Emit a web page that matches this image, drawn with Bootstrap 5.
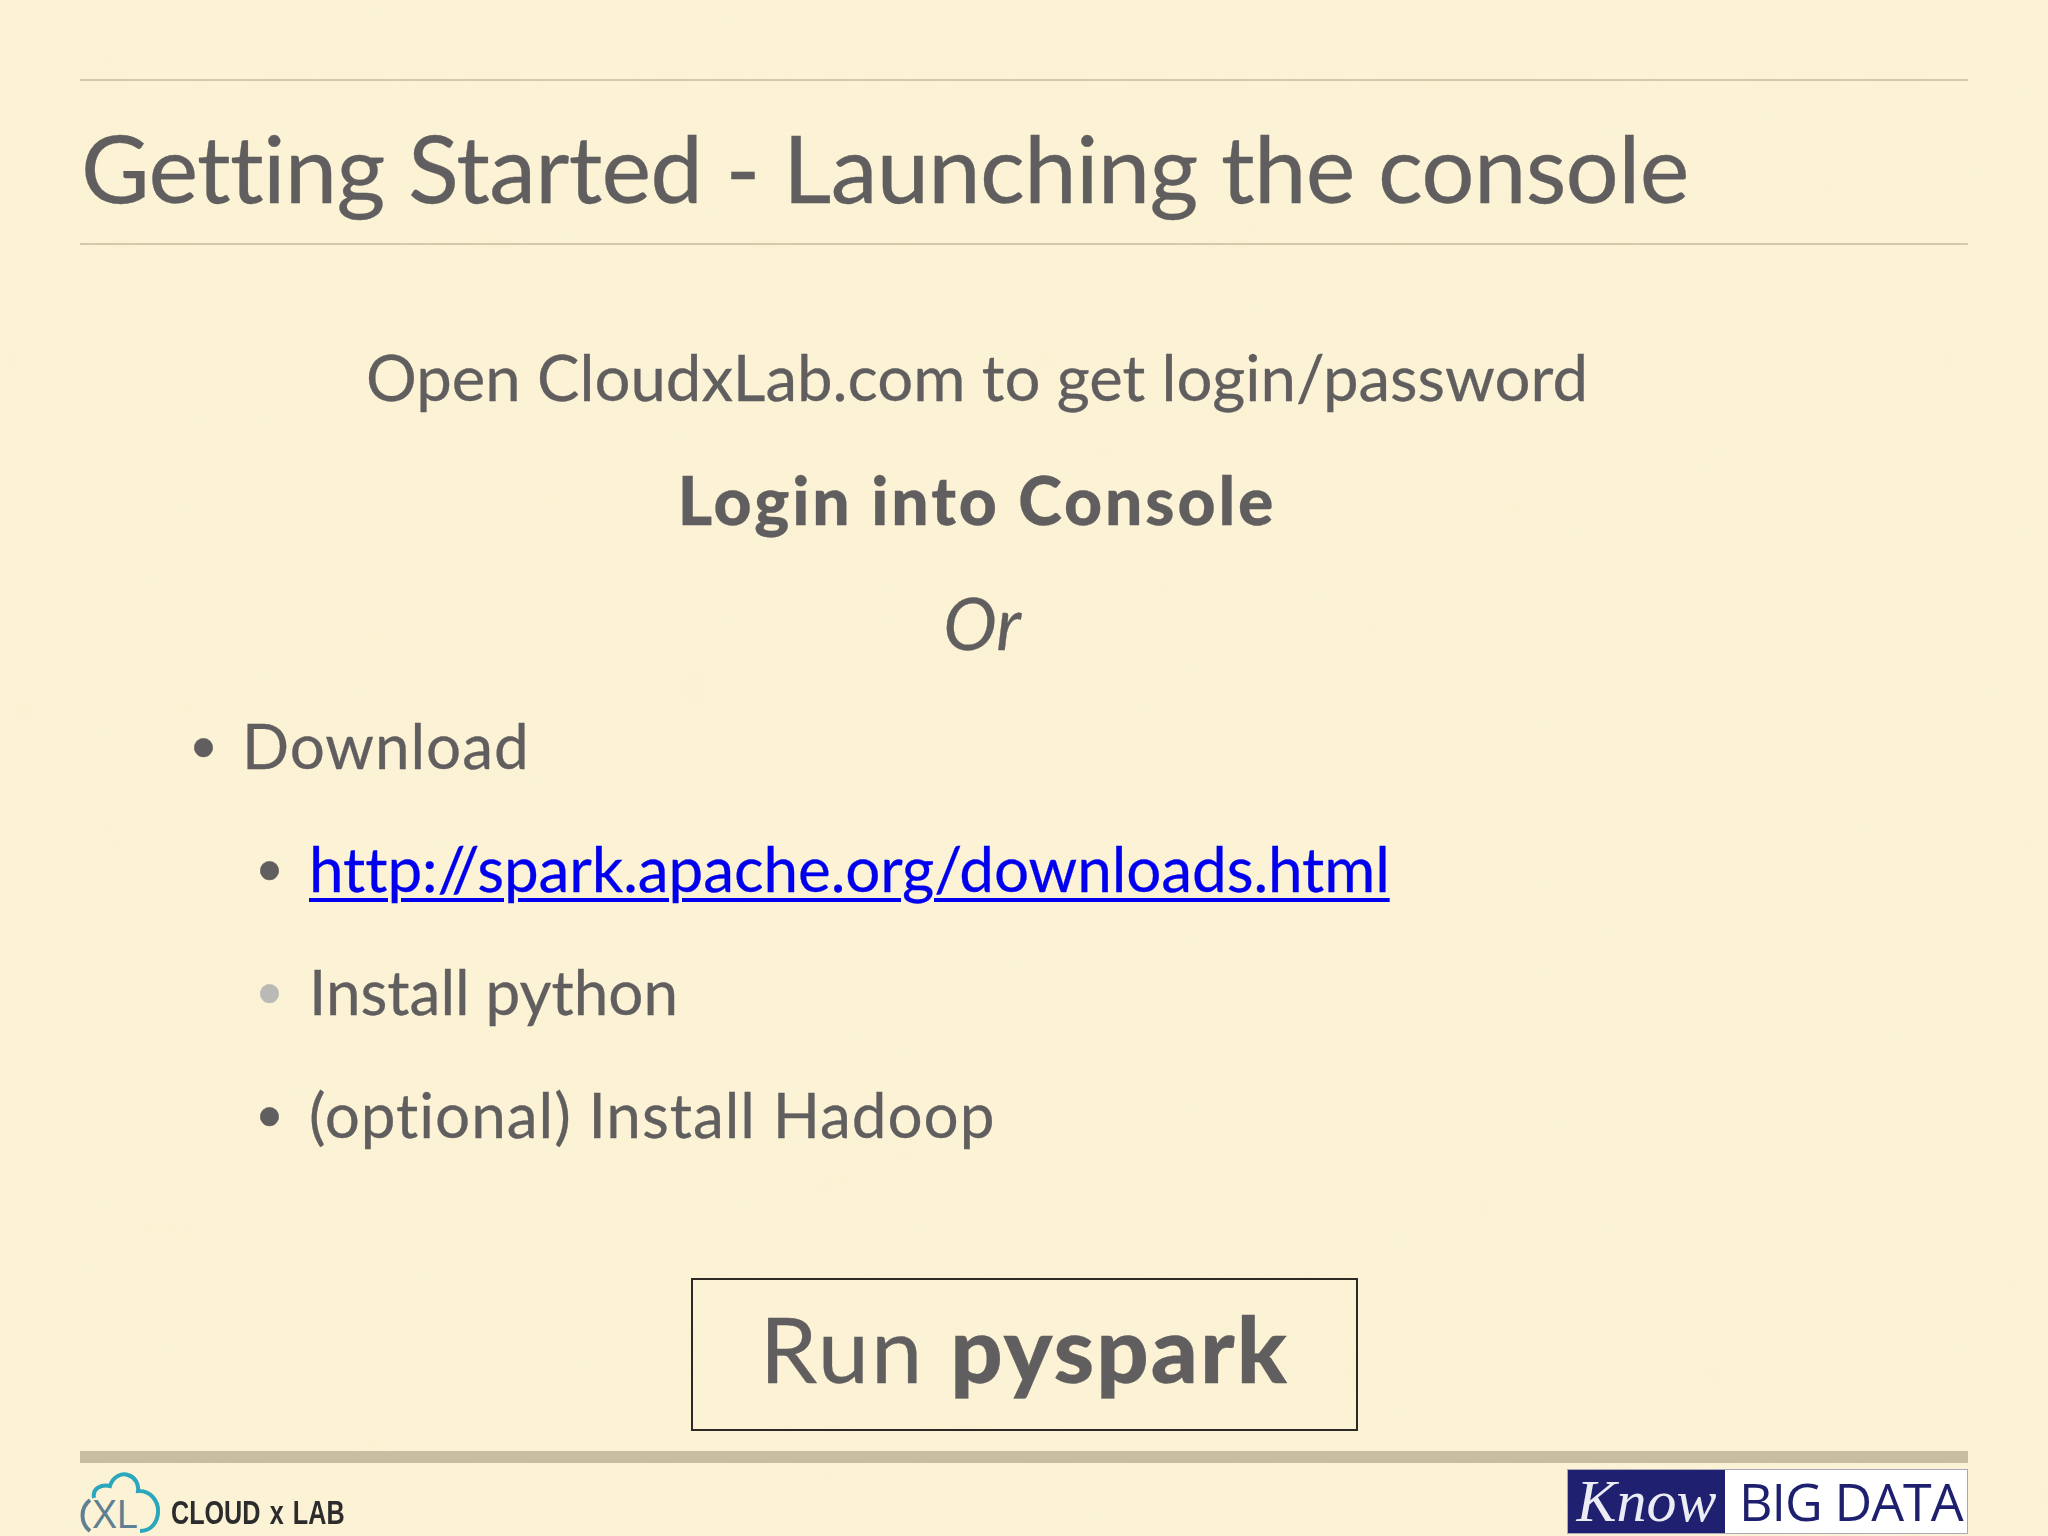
<!DOCTYPE html>
<html lang="en">
<head>
<meta charset="utf-8">
<title>Getting Started - Launching the console</title>
<link href="https://cdn.jsdelivr.net/npm/bootstrap@5.3.0/dist/css/bootstrap.min.css" rel="stylesheet">
<style>
html,body{margin:0;height:100%}
body{background-color:#fcf3d6;background-image:url("data:image/svg+xml,%3Csvg xmlns='http://www.w3.org/2000/svg' width='2048' height='1536'%3E%3Cfilter id='n'%3E%3CfeTurbulence type='fractalNoise' baseFrequency='0.015' numOctaves='4' seed='5'/%3E%3CfeColorMatrix values='0 0 0 0 0.93 0 0 0 0 0.84 0 0 0 0 0.6 0 0 0 1.1 -0.42'/%3E%3C/filter%3E%3Crect width='2048' height='1536' filter='url(%23n)' opacity='.35'/%3E%3C/svg%3E");font-family:Lato,"Liberation Sans",sans-serif;color:#605e5e;font-variant-ligatures:none;-webkit-text-stroke:.3px currentColor}
.slide{width:2048px;height:1536px;padding:79px 80px 0;overflow:hidden}
.head-band{height:166px;border-top:2px solid #d3c8a8;border-bottom:2px solid #d3c8a8;padding-left:1px}
.head-band h1{font-size:94px;line-height:172px;font-weight:400;margin:0;height:162px;letter-spacing:-.72px;white-space:nowrap}
.body-zone{height:1206px;padding-top:70px}
.txt-row{font-size:62px;line-height:123px;height:123px;white-space:nowrap}
.shift{padding-right:94px}
.row-open{font-size:63.5px}
.row-login{font-size:66px;font-weight:900;letter-spacing:2.9px}
.row-or{font-size:72px;padding-right:84px}
.lvl1{padding-left:162px;letter-spacing:.95px}
.lvl2{padding-left:229px}
.tight{letter-spacing:-.08px}
.spaced{letter-spacing:.96px}
.dot{display:inline-block;width:54px;font-size:50px;margin-left:-54px;line-height:1;vertical-align:6px;letter-spacing:0}
.lvl1 .dot{width:53px;margin-left:-53px}
.dot-pale{color:#b9b9b5}
.slide a{color:#0000ee;text-decoration:underline;text-decoration-thickness:4px;text-underline-offset:6px}
.run-box{width:667px;height:153px;margin-left:611px;margin-top:102px;padding-bottom:14px;border:2px solid #2d2a26;font-size:92px;letter-spacing:2.1px}
.run-box b{font-weight:900}
.rule-thick{height:12px;background:#c7bea2}
.foot-zone{height:74px;padding-top:5px;-webkit-text-stroke:0}
.cxl-mark{overflow:visible}
.cxl-word{font-family:"Liberation Sans",sans-serif;font-weight:700;font-size:34px;color:#2c2c2c;line-height:1;margin-left:11px;margin-top:27px;white-space:nowrap;word-spacing:3px;transform:scaleX(.74);transform-origin:left center}
.kbd-logo{width:401px;height:65px;margin-top:1px;border:1px solid #a9a8b8;background:#fff}
.know-part{width:157px;background:#1f2070;color:#ececf5;font-family:"Liberation Serif",serif;font-style:italic;font-size:60px;line-height:62px;text-align:center;flex:none}
.big-part{color:#1e1f6e;font-family:"Open Sans",sans-serif;font-size:52px;line-height:62px;white-space:nowrap;padding-left:14px;letter-spacing:-1px}
</style>
</head>
<body>
<div class="slide">
  <div class="head-band"><h1>Getting Started - Launching the console</h1></div>
  <div class="body-zone">
    <div class="txt-row text-center shift row-open">Open CloudxLab.com to get login/password</div>
    <div class="txt-row text-center shift row-login">Login into Console</div>
    <div class="txt-row text-center fst-italic row-or">Or</div>
    <div class="txt-row lvl1"><span class="dot">•</span>Download</div>
    <div class="txt-row lvl2 tight"><span class="dot">•</span><a href="#">http://spark.apache.org/downloads.html</a></div>
    <div class="txt-row lvl2"><span class="dot dot-pale">•</span>Install python</div>
    <div class="txt-row lvl2 spaced"><span class="dot">•</span>(optional) Install Hadoop</div>
    <div class="run-box d-flex align-items-center justify-content-center"><span>Run <b>pyspark</b></span></div>
  </div>
  <div class="rule-thick"></div>
  <div class="foot-zone d-flex justify-content-between align-items-start">
    <div class="d-flex">
      <svg class="cxl-mark" width="80" height="69" viewBox="0 0 80 69" role="img" aria-label="CXL cloud">
        <path d="M14 30C12 20 22 16 30 18C33 8 42 5 48 7C55 9 59 16 58 23C70 22 79 33 78 45C77 56 70 63 60 63" fill="none" stroke="#2aa7bd" stroke-width="4"/>
        <path d="M10 32C0 40 0 55 10 63" fill="none" stroke="#5f7f93" stroke-width="4"/>
        <text x="12" y="60" font-family="Liberation Sans, sans-serif" font-size="40" fill="#5f7f93" textLength="46" lengthAdjust="spacingAndGlyphs">XL</text>
      </svg>
      <div class="cxl-word">CLOUD x LAB</div>
    </div>
    <div class="kbd-logo d-flex">
      <div class="know-part">Know</div>
      <div class="big-part">BIG DATA</div>
    </div>
  </div>
</div>
<script src="https://cdn.jsdelivr.net/npm/bootstrap@5.3.0/dist/js/bootstrap.bundle.min.js"></script>
</body>
</html>
